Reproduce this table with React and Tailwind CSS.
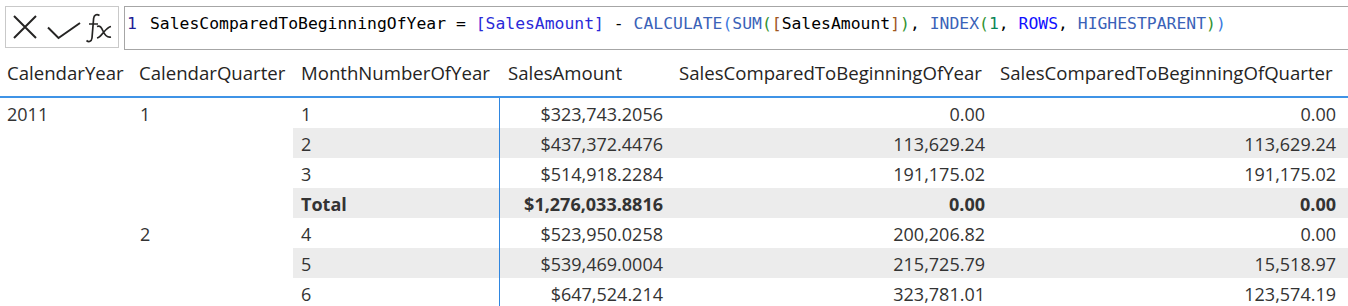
import React from 'react'

const rows = [
  { year: '2011', q: '1', m: '1', amt: '$323,743.2056', y: '0.00', qv: '0.00', shade: false },
  { m: '2', amt: '$437,372.4476', y: '113,629.24', qv: '113,629.24', shade: true },
  { m: '3', amt: '$514,918.2284', y: '191,175.02', qv: '191,175.02', shade: false },
  { m: 'Total', amt: '$1,276,033.8816', y: '0.00', qv: '0.00', shade: true, bold: true },
  { q: '2', m: '4', amt: '$523,950.0258', y: '200,206.82', qv: '0.00', shade: false },
  { m: '5', amt: '$539,469.0004', y: '215,725.79', qv: '15,518.97', shade: true },
  { m: '6', amt: '$647,524.214', y: '323,781.01', qv: '123,574.19', shade: false },
]

// the 1px column is the blue divider after the row headers
const grid = 'grid grid-cols-[131px_162px_206px_1px_171px_322px_355px]'

function FormulaBar() {
  return (
    <div className="flex h-[50px] pt-[6px] pl-[5px]">
      <div className="flex h-[42px] w-[114px] items-start border border-[#c9c9c9] text-[#252423]">
        <svg width="24" height="24" viewBox="0 0 24 24" className="ml-[7px] mt-[8px]">
          <path d="M1 1 L23 23 M23 1 L1 23" stroke="currentColor" strokeWidth="2" fill="none" />
        </svg>
        <svg width="34" height="18" viewBox="0 0 34 18" className="ml-[10px] mt-[15px]">
          <path d="M1 5.5 L11.5 16 L33 1" stroke="currentColor" strokeWidth="2" fill="none" />
        </svg>
        <svg width="28" height="30" viewBox="0 0 28 30" className="ml-[4px] mt-[6px]">
          <path
            d="M14.5 2.5 C11.5 0.5 9 2 8.6 5.5 L7 25 C6.5 28.5 4 29.5 1.5 27.5 M4 11 L13 11"
            stroke="currentColor"
            strokeWidth="1.7"
            fill="none"
          />
          <path
            d="M12 13.5 C15 12 16.5 14.5 18 18 C19.5 21.5 21.5 25 26 24 M26 13.5 C23 14 21 16.5 18 20 C16.5 22 14.5 24.5 12 25"
            stroke="currentColor"
            strokeWidth="1.7"
            fill="none"
          />
        </svg>
      </div>
      <div className="ml-[5px] flex h-[44px] flex-1 border-y border-l border-[#a6a6a6] pt-[7px] font-['DejaVu_Sans_Mono',monospace] text-[16.4px] leading-[20px] whitespace-pre">
        <span className="w-[25px] pl-[2px] text-[#1e1e96]">1</span>
        <span className="text-black">
          SalesComparedToBeginningOfYear = <span className="text-[#2a2ad8]">[SalesAmount]</span> -{' '}
          <span className="text-[#3a62b8]">CALCULATE</span>
          <span className="text-[#3b7ae0]">(</span>
          <span className="text-[#3a62b8]">SUM</span>
          <span className="text-[#319331]">(</span>
          <span className="text-[#a0561e]">[</span>SalesAmount<span className="text-[#a0561e]">]</span>
          <span className="text-[#319331]">)</span>,{' '}
          <span className="text-[#3a62b8]">INDEX</span>
          <span className="text-[#319331]">(</span>
          <span className="text-[#098658]">1</span>, <span className="text-[#1010ff]">ROWS</span>,{' '}
          <span className="text-[#3a62b8]">HIGHESTPARENT</span>
          <span className="text-[#319331]">)</span>
          <span className="text-[#3b7ae0]">)</span>
        </span>
      </div>
    </div>
  )
}

export default function App() {
  return (
    <div className="h-[306px] w-[1348px] overflow-hidden bg-white font-['Open_Sans',sans-serif]">
      <FormulaBar />

      <div className={`${grid} h-[48px] items-center border-b-2 border-b-[#3f93e6] text-[18.6px] text-[#252423]`}>
        <div className="pl-[7px] whitespace-nowrap">CalendarYear</div>
        <div className="pl-[8px] whitespace-nowrap">CalendarQuarter</div>
        <div className="pl-[8px] whitespace-nowrap">MonthNumberOfYear</div>
        <div />
        <div className="pl-[8px] whitespace-nowrap">SalesAmount</div>
        <div className="pl-[8px] whitespace-nowrap">SalesComparedToBeginningOfYear</div>
        <div className="pl-[7px] whitespace-nowrap">SalesComparedToBeginningOfQuarter</div>
      </div>

      {rows.map((r, i) => {
        const cell = `flex items-center pt-[3px] ${r.shade ? 'bg-[#ececec]' : ''} ${r.bold ? 'font-bold' : ''}`
        return (
          <div key={i} className={`${grid} h-[30px] items-stretch text-[18px] text-[#333333]`}>
            <div className="flex items-center pt-[3px] pl-[7px]">{r.year}</div>
            <div className="flex items-center pt-[3px] pl-[9px]">{r.q}</div>
            <div className={`${cell} pl-[8px]`}>{r.m}</div>
            <div className="bg-[#2f86e0]" />
            <div className={`${cell} justify-end pr-[8px]`}>{r.amt}</div>
            <div className={`${cell} justify-end pr-[8px]`}>{r.y}</div>
            <div className={`${cell} justify-end pr-[12px]`}>{r.qv}</div>
          </div>
        )
      })}
    </div>
  )
}
